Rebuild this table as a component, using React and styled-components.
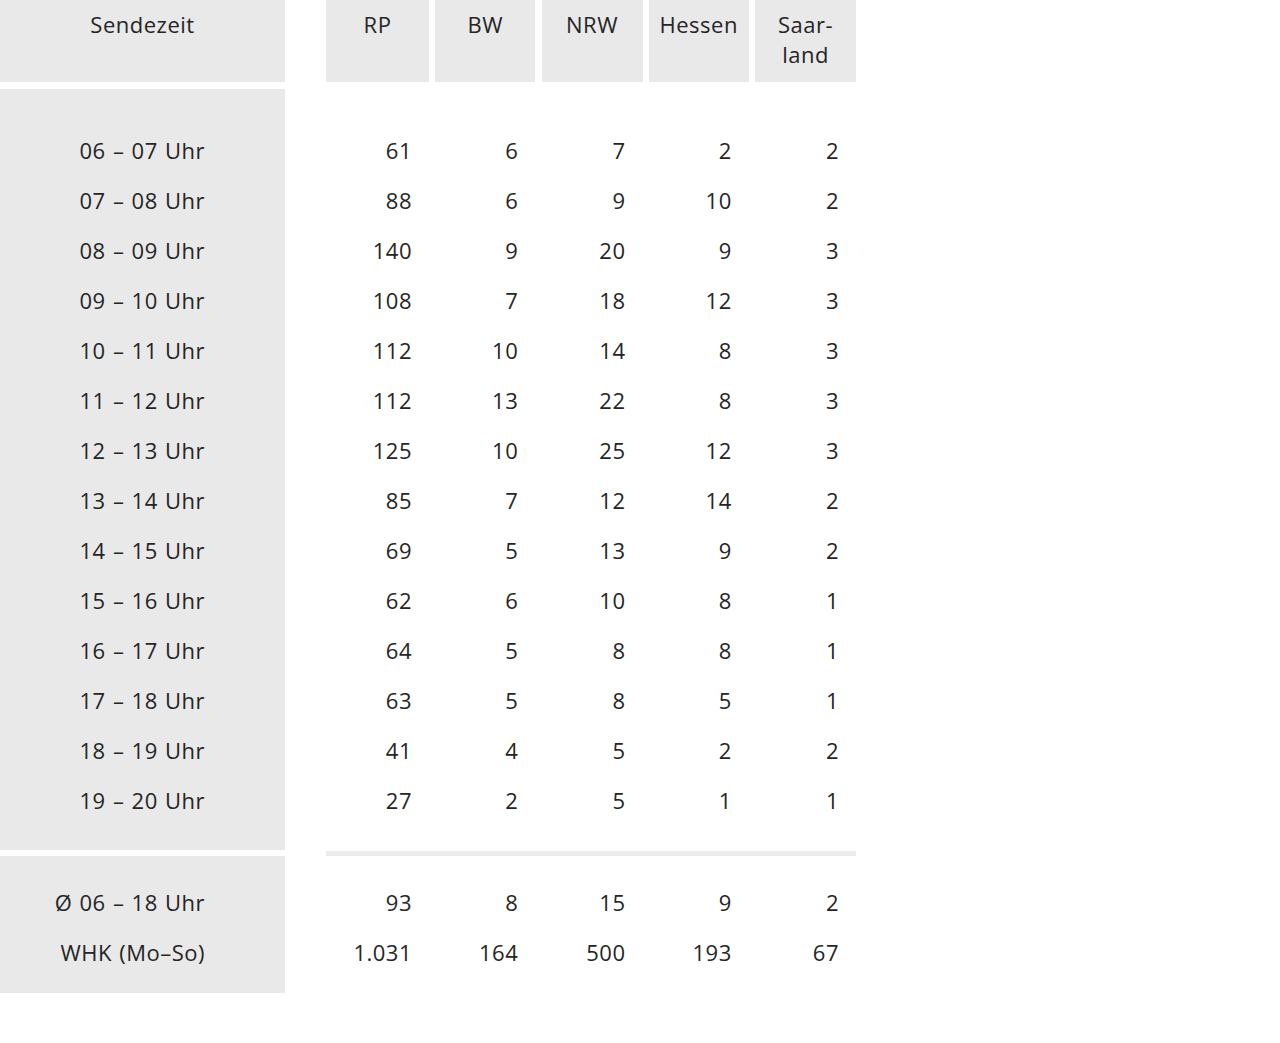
import React from "react";
import styled, { createGlobalStyle } from "styled-components";

const Global = createGlobalStyle`
    html, body {
        margin:0;
        padding:0;
        background:#ffffff;
    }
    body {
        font-family:"Open Sans", "Noto Sans", sans-serif;
        color:#252525;
    }
`

const Table = styled.section`
    width:856px;
    display:flex;
    flex-direction:column;
    font-size:22px;
    font-weight:500;
    letter-spacing:0.5px;
    line-height:30px;
`
const Group = styled.div`
    display:flex;
    align-items:stretch;
    margin-top:${p => p.$gap || 0}px;
    height:${p => p.$height}px;
`
const LabelCol = styled.div`
    width:285px;
    flex:none;
    background:#e9e9e9;
    box-sizing:border-box;
    padding:${p => p.$pad};
    text-align:${p => p.$align || "right"};
    padding-right:${p => p.$align === "center" ? 0 : 80}px;
`
const Values = styled.div`
    margin-left:41px;
    display:grid;
    grid-template-columns:103px 100px 101px 100px 101px;
    column-gap:6.25px;
    box-sizing:border-box;
    padding:${p => p.$pad || 0};
    border-top:${p => p.$line ? "5px solid #ebebeb" : "none"};
    margin-top:${p => p.$line ? -5 : 0}px;
    align-content:start;
`
const HeadCell = styled.div`
    background:#e9e9e9;
    text-align:center;
    padding-top:9px;
    height:82px;
    box-sizing:border-box;
`
const Label = styled.div`
    height:50px;
    line-height:50px;
    word-spacing:1px;
`
const Num = styled.div`
    height:50px;
    line-height:50px;
    text-align:right;
    padding-right:17px;
`

const cols = ["RP", "BW", "NRW", "Hessen", "Saar-\nland"]

const rows = [
    ["06 – 07 Uhr", 61, 6, 7, 2, 2],
    ["07 – 08 Uhr", 88, 6, 9, 10, 2],
    ["08 – 09 Uhr", 140, 9, 20, 9, 3],
    ["09 – 10 Uhr", 108, 7, 18, 12, 3],
    ["10 – 11 Uhr", 112, 10, 14, 8, 3],
    ["11 – 12 Uhr", 112, 13, 22, 8, 3],
    ["12 – 13 Uhr", 125, 10, 25, 12, 3],
    ["13 – 14 Uhr", 85, 7, 12, 14, 2],
    ["14 – 15 Uhr", 69, 5, 13, 9, 2],
    ["15 – 16 Uhr", 62, 6, 10, 8, 1],
    ["16 – 17 Uhr", 64, 5, 8, 8, 1],
    ["17 – 18 Uhr", 63, 5, 8, 5, 1],
    ["18 – 19 Uhr", 41, 4, 5, 2, 2],
    ["19 – 20 Uhr", 27, 2, 5, 1, 1],
]

const totals = [
    ["Ø 06 – 18 Uhr", 93, 8, 15, 9, 2],
    ["WHK (Mo–So)", "1.031", 164, 500, 193, 67],
]

export default function App() {
    return (
        <>
            <Global />
            <Table>
                <Group $height={82}>
                    <LabelCol $align="center" $pad="9px 0 0 0">Sendezeit</LabelCol>
                    <Values>
                        {cols.map(c => (
                            <HeadCell key={c}>
                                {c.split("\n").map(l => <div key={l}>{l}</div>)}
                            </HeadCell>
                        ))}
                    </Values>
                </Group>

                <Group $gap={7} $height={761}>
                    <LabelCol $pad="36px 0 0 0">
                        {rows.map(r => <Label key={r[0]}>{r[0]}</Label>)}
                    </LabelCol>
                    <Values $pad="36px 0 0 0">
                        {rows.map(r => r.slice(1).map((v, i) => <Num key={r[0] + i}>{v}</Num>))}
                    </Values>
                </Group>

                <Group $gap={6} $height={137}>
                    <LabelCol $pad="21px 0 0 0">
                        {totals.map(r => <Label key={r[0]}>{r[0]}</Label>)}
                    </LabelCol>
                    <Values $line $pad="21px 0 0 0">
                        {totals.map(r => r.slice(1).map((v, i) => <Num key={r[0] + i}>{v}</Num>))}
                    </Values>
                </Group>
            </Table>
        </>
    )
}
